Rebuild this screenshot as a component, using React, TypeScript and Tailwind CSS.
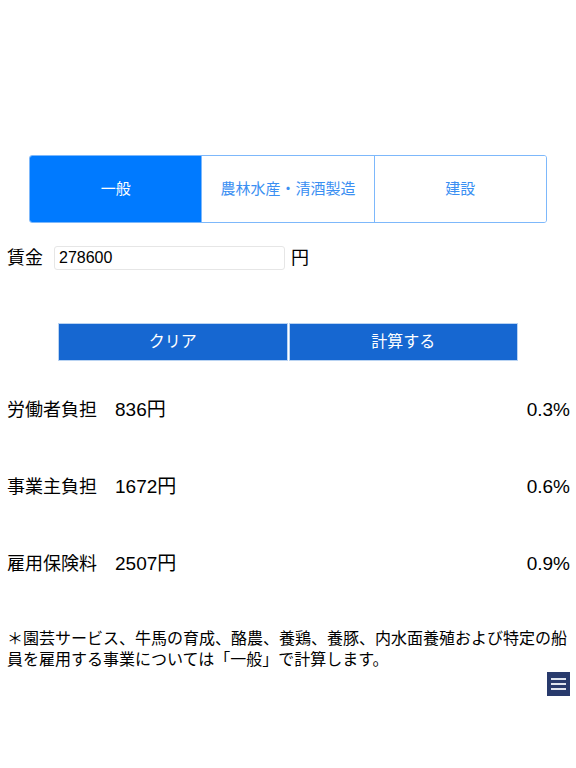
import React, { useState } from "react";

const FONT = {
  fontFamily:
    '"Liberation Sans", "Noto Sans CJK JP", "Noto Sans", sans-serif',
};

const CATEGORIES = ["一般", "農林水産・清酒製造", "建設"];

const RESULTS = [
  { label: "労働者負担", amount: "836円", rate: "0.3%" },
  { label: "事業主負担", amount: "1672円", rate: "0.6%" },
  { label: "雇用保険料", amount: "2507円", rate: "0.9%" },
];

const App: React.FC = () => {
  const [selected, setSelected] = useState(0);
  const [wage, setWage] = useState("278600");

  return (
    <div className="relative min-h-[768px] w-[576px] bg-white text-black" style={FONT}>
      <div className="pt-[155px]">
        <div className="mx-[29px] flex h-[68px] overflow-hidden rounded-[3px] border border-[#7db8fb]">
          {CATEGORIES.map((c, i) => (
            <button
              key={c}
              onClick={() => setSelected(i)}
              className={`flex-1 text-[15px] ${
                i > 0 ? "border-l border-[#7db8fb]" : ""
              } ${
                selected === i
                  ? "bg-[#007aff] text-white"
                  : "bg-white text-[#3b8ff2]"
              }`}
            >
              {c}
            </button>
          ))}
        </div>

        <div className="mt-[23px] flex items-center pl-[7px]">
          <span className="text-[18px] leading-none">賃金</span>
          <input
            value={wage}
            onChange={(e) => setWage(e.target.value)}
            className="ml-[11px] h-[24px] w-[231px] rounded-[3px] border border-[#e6e6e6] px-[4px] text-[16px] outline-none"
            style={FONT}
          />
          <span className="ml-[6px] text-[18px] leading-none">円</span>
        </div>

        <div className="mt-[53px] flex justify-center gap-px px-[58px]">
          <button className="h-[38px] flex-1 border border-[#b9d3f2] bg-[#1667d1] text-[16px] text-white">
            クリア
          </button>
          <button className="h-[38px] flex-1 border border-[#b9d3f2] bg-[#1667d1] text-[16px] text-white">
            計算する
          </button>
        </div>

        <div className="mt-[37px] flex flex-col gap-[53px] pl-[7px] pr-[6px]">
          {RESULTS.map((r) => (
            <div key={r.label} className="flex h-[24px] items-center text-[18px]">
              <span className="w-[108px]">{r.label}</span>
              <span className="text-[19px]">{r.amount}</span>
              <span className="ml-auto text-[19px]">{r.rate}</span>
            </div>
          ))}
        </div>

        <p className="mt-[52px] px-[7px] text-[16px] leading-[21px]">
          ＊園芸サービス、牛馬の育成、酪農、養鶏、養豚、内水面養殖および特定の船員を雇用する事業については「一般」で計算します。
        </p>

        <div className="mt-[2px] flex justify-end pr-[6px]">
          <button className="flex h-[24px] w-[23px] flex-col items-center justify-center gap-[3px] bg-[#283a6c]">
            <span className="h-[2px] w-[15px] bg-[#dfe4ee]" />
            <span className="h-[2px] w-[15px] bg-[#dfe4ee]" />
            <span className="h-[2px] w-[15px] bg-[#dfe4ee]" />
          </button>
        </div>
      </div>
    </div>
  );
};

export default App;
